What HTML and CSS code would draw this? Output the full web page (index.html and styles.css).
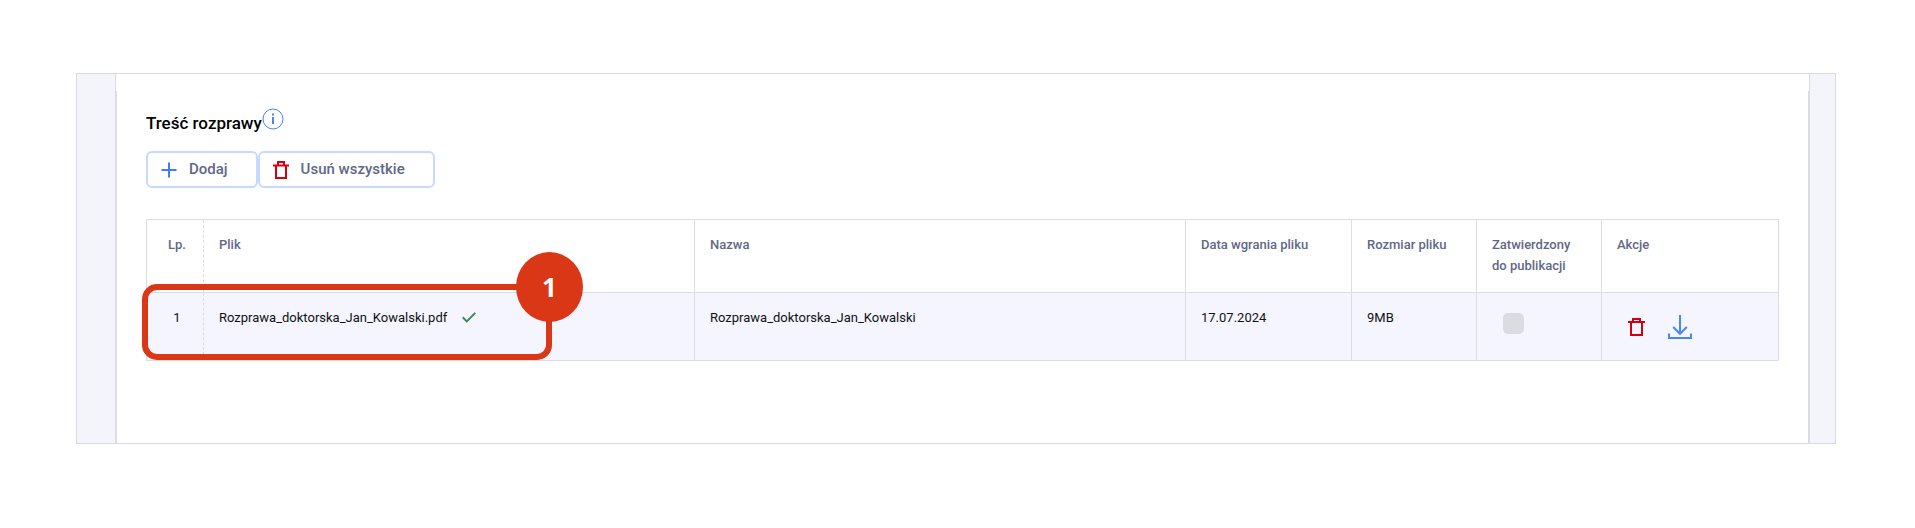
FILE: index.html
```html
<!DOCTYPE html>
<html lang="pl">
<head>
<meta charset="utf-8">
<title>Treść rozprawy</title>
<link rel="stylesheet" href="styles.css">
</head>
<body>
<main class="frame">
  <div class="gutter gutter-left"></div>
  <section class="panel">
    <header class="heading">
      <h1 class="title">Treść rozprawy</h1>
      <button class="info" type="button" aria-label="Informacja">
        <svg width="22" height="22" viewBox="0 0 22 22" fill="none" stroke="#4a82f7"><circle cx="11" cy="11" r="10"/><path d="M11 9v7" stroke-width="2"/><path d="M11 5.5v2" stroke-width="2"/></svg>
      </button>
    </header>
    <div class="toolbar">
      <button class="btn" type="button">
        <svg width="16" height="16" viewBox="0 0 16 16" fill="none" stroke="#3f7cf8" stroke-width="2"><path d="M8 .5v15M.5 8h15"/></svg>
        <span>Dodaj</span>
      </button>
      <button class="btn" type="button">
        <svg width="16" height="18" viewBox="0 0 16 18" fill="none" stroke="#d5000f" stroke-width="2"><path d="M0 4.500h16M3 4.500V17h10V4.500"/><path d="M5 4V1h6v3"/></svg>
        <span>Usuń wszystkie</span>
      </button>
    </div>
    <div class="table-wrap">
      <table class="files">
        <colgroup><col class="c-no"><col><col><col class="c-date"><col class="c-size"><col class="c-ok"><col class="c-act"></colgroup>
        <thead>
          <tr><th>Lp.</th><th>Plik</th><th>Nazwa</th><th>Data wgrania pliku</th><th>Rozmiar pliku</th><th>Zatwierdzony do publikacji</th><th>Akcje</th></tr>
        </thead>
        <tbody>
          <tr>
            <td>1</td>
            <td><span class="file">Rozprawa_doktorska_Jan_Kowalski.pdf <svg width="14" height="11" viewBox="0 0 14 11" fill="none" stroke="#3f8655" stroke-width="2"><path d="M.7 5.2 4.8 9.4 13.3.9"/></svg></span></td>
            <td>Rozprawa_doktorska_Jan_Kowalski</td>
            <td>17.07.2024</td>
            <td>9MB</td>
            <td><input class="check" type="checkbox" aria-label="Zatwierdzony do publikacji" disabled></td>
            <td>
              <div class="actions">
                <button class="icon-btn" type="button" aria-label="Usuń"><svg width="17" height="18" viewBox="0 0 17 18" fill="none" stroke="#d5000f" stroke-width="2"><path d="M0 4h17M3 4v13h11V4"/><path d="M5 4V1h7v3"/></svg></button>
                <button class="icon-btn" type="button" aria-label="Pobierz"><svg width="24" height="24" viewBox="0 0 24 24" fill="none" stroke="#4a85fa" stroke-width="2"><path d="M12 0v18.500M5.200 12l6.800 6.800 6.800-6.800M1 18.500V23h22v-4.500"/></svg></button>
              </div>
            </td>
          </tr>
        </tbody>
      </table>
      <div class="callout"><span class="badge">1</span></div>
    </div>
  </section>
  <div class="gutter gutter-right"></div>
</main>
</body>
</html>
```
FILE: styles.css
```css
* { box-sizing: border-box; }
body {
  margin: 0;
  padding: 73px 79px 84px 76px;
  background: #fff;
  color: #111;
  font: 13px/21px Roboto, "Liberation Sans", sans-serif;
}
button { padding: 0; border: 0; background: none; font: inherit; color: inherit; }
svg { display: block; }
.frame {
  display: grid;
  grid-template-columns: 39px 1fr 26px;
  border: 1px solid #d9d9de;
}
.gutter { background: #f4f5fb; }
.gutter-left { border-right: 1px solid #dcdce1; }
.gutter-right { border-left: 1px solid #dcdce1; }
.panel {
  padding: 34px 29px 82px 29px;
  border: solid transparent;
  border-width: 0 1px;
  border-image: linear-gradient(transparent 18px, #dcdce1 18px) 1;
}
.heading { display: flex; height: 30px; }
.title { margin: 0; padding-top: 5px; font-size: 17px; font-weight: 500; line-height: 20px; color: #000; }
.info { align-self: flex-start; }
.toolbar { display: flex; margin-top: 13px; }
.btn {
  display: flex;
  align-items: center;
  gap: 12px;
  height: 37px;
  padding: 0 28px 0 13px;
  border: 2px solid #c7d9ff;
  border-radius: 6px;
  font-size: 15px;
  font-weight: 500;
  color: #5f6888;
}
.table-wrap { position: relative; margin-top: 31px; }
.files { width: 100%; table-layout: fixed; border-collapse: collapse; }
.c-no { width: 57px; }
.c-date { width: 166px; }
.c-size, .c-ok { width: 125px; }
.c-act { width: 177px; }
.files th, .files td {
  padding: 14px 15px;
  border: 1px solid #dcdce1;
  text-align: left;
  vertical-align: top;
}
.files thead tr { height: 73px; }
.files th { font-weight: 500; color: #5f6888; }
.files tbody tr { height: 68px; background: #f4f5fe; }
.files tr > :first-child { padding: 14px 0 14px 4px; border-right-style: dashed; text-align: center; }
.files tr > :nth-child(2) { border-left-style: dashed; }
.file { display: flex; align-items: center; gap: 15px; }
.check {
  display: block;
  appearance: none;
  width: 21px;
  height: 21px;
  margin: 6px 0 0 11px;
  border-radius: 5px;
  background: #dbdce1;
}
.actions { display: flex; align-items: center; gap: 23px; padding: 8px 0 0 11px; }
.callout {
  position: absolute;
  top: 65px;
  left: -4px;
  width: 410px;
  height: 76px;
  border: 6px solid #da3716;
  border-radius: 15px;
}
.badge {
  position: absolute;
  top: -38px;
  right: -37px;
  width: 67px;
  height: 70px;
  border-radius: 50%;
  background: #da3716;
  color: #fff;
  font: 700 26px/70px "Open Sans", sans-serif;
  text-align: center;
}
```
